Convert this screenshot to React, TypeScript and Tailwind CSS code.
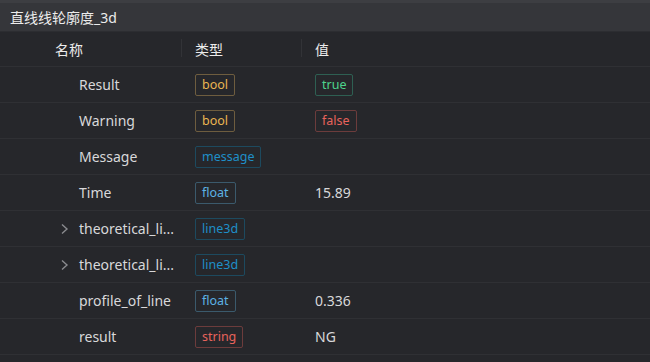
import React from 'react';

type Tone = 'yellow' | 'green' | 'red' | 'cyan' | 'blue';

interface Row {
  name: string;
  type: string;
  typeTone: Tone;
  value?: string;
  valueTone?: Tone;
  expandable?: boolean;
}

const toneClass: Record<Tone, string> = {
  yellow: 'border-[#6e5d3f] text-[#eab552]',
  green: 'border-[#2e5f52] text-[#4ed38c]',
  red: 'border-[#6c3c3c] text-[#e8635c]',
  cyan: 'border-[#1d4a5f] text-[#1f8fc8]',
  blue: 'border-[#3b5a6c] text-[#5db2e4]',
};

const rows: Row[] = [
  { name: 'Result', type: 'bool', typeTone: 'yellow', value: 'true', valueTone: 'green' },
  { name: 'Warning', type: 'bool', typeTone: 'yellow', value: 'false', valueTone: 'red' },
  { name: 'Message', type: 'message', typeTone: 'cyan' },
  { name: 'Time', type: 'float', typeTone: 'blue', value: '15.89' },
  { name: 'theoretical_li...', type: 'line3d', typeTone: 'cyan', expandable: true },
  { name: 'theoretical_li...', type: 'line3d', typeTone: 'cyan', expandable: true },
  { name: 'profile_of_line', type: 'float', typeTone: 'blue', value: '0.336' },
  { name: 'result', type: 'string', typeTone: 'red', value: 'NG' },
];

const Badge: React.FC<{ text: string; tone: Tone }> = ({ text, tone }) => (
  <span className={`inline-flex h-[22px] items-center rounded-[2px] border px-[6px] text-[12.5px] leading-none ${toneClass[tone]}`}>
    {text}
  </span>
);

const App: React.FC = () => {
  return (
    <div
      className="h-[362px] w-[650px] overflow-hidden bg-[#26272b] text-[#d8d8da]"
      style={{ fontFamily: '"Noto Sans", "Noto Sans CJK SC", sans-serif' }}
    >
      <div className="flex h-[31px] items-center border-t-[3px] border-[#3d3e42] bg-[#35363a] pl-[10px] text-[14px] text-[#ececec]">
        直线线轮廓度_3d
      </div>
      <div className="h-px bg-[#2c2d31]" />
      <div className="flex h-[35px] items-center border-b border-[#2f3034] text-[14px] text-[#ececec]">
        <div className="flex w-[182px] justify-between pl-[55px]">
          <span>名称</span>
          <span className="h-[18px] w-px bg-[#323337]" />
        </div>
        <div className="flex w-[120px] justify-between pl-[13px]">
          <span>类型</span>
          <span className="h-[18px] w-px bg-[#323337]" />
        </div>
        <div className="pl-[13px]">值</div>
      </div>
      {rows.map((r, i) => (
        <div key={i} className="flex h-[36px] items-center border-b border-[#2f3034] text-[14px]">
          <div className="flex w-[195px] items-center">
            <span className="flex w-[79px] justify-end pr-[10px]">
              {r.expandable && (
                <svg width="9" height="12" viewBox="0 0 9 12" className="text-[#8a8b8f]">
                  <path d="M2 1.5 L7 6 L2 10.5" stroke="currentColor" strokeWidth="1.4" fill="none" />
                </svg>
              )}
            </span>
            <span>{r.name}</span>
          </div>
          <div className="w-[120px]">
            <Badge text={r.type} tone={r.typeTone} />
          </div>
          <div>
            {r.value && (r.valueTone ? <Badge text={r.value} tone={r.valueTone} /> : <span>{r.value}</span>)}
          </div>
        </div>
      ))}
    </div>
  );
};

export default App;
